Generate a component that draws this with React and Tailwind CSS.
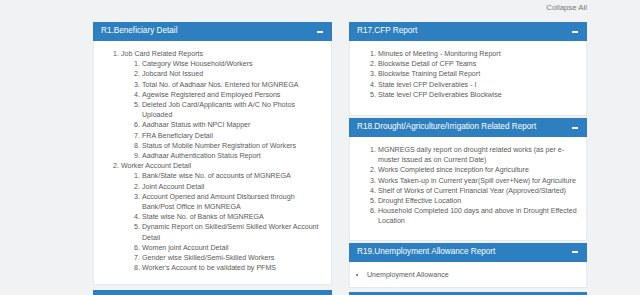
function PanelHeader({ title }) {
  return (
    <div className="flex h-[19px] items-center justify-between bg-[#2d7fbf] pl-[8px] pr-[9px] text-[8.2px] text-white">
      <span>{title}</span>
      <span className="block h-[2px] w-[6px] bg-white" />
    </div>
  );
}

function NumList({ items }) {
  return (
    <ol className="ml-[28px] list-decimal">
      {items.map((item) => (
        <li key={item}>{item}</li>
      ))}
    </ol>
  );
}

const jobCard = [
  'Category Wise Household/Workers',
  'Jobcard Not Issued',
  'Total No. of Aadhaar Nos. Entered for MGNREGA',
  'Agewise Registered and Employed Persons',
  'Deleted Job Card/Applicants with A/C No Photos Uploaded',
  'Aadhaar Status with NPCI Mapper',
  'FRA Beneficiary Detail',
  'Status of Mobile Number Registration of Workers',
  'Aadhaar Authentication Status Report',
];

const workerAccount = [
  'Bank/State wise No. of accounts of MGNREGA',
  'Joint Account Detail',
  'Account Opened and Amount Disbursed through Bank/Post Office in MGNREGA',
  'State wise No. of Banks of MGNREGA',
  'Dynamic Report on Skilled/Semi Skilled Worker Account Detail',
  'Women joint Account Detail',
  'Gender wise Skilled/Semi-Skilled Workers',
  "Worker's Account to be validated by PFMS",
];

const cfp = [
  'Minutes of Meeting - Monitoring Report',
  'Blockwise Detail of CFP Teams',
  'Blockwise Training Detail Report',
  'State level CFP Deliverables - I',
  'State level CFP Deliverables Blockwise',
];

const drought = [
  'MGNREGS daily report on drought related works (as per e-muster issued as on Current Date)',
  'Works Completed since inception for Agriculture',
  'Works Taken-up in Current year(Spill over+New) for Agriculture',
  'Shelf of Works of Current Financial Year (Approved/Started)',
  'Drought Effective Location',
  'Household Completed 100 days and above in Drought Effected Location',
];

export default function App() {
  return (
    <div className="h-[295px] overflow-hidden bg-[#f0f2f4] font-['Liberation_Sans',Arial,sans-serif] text-[7.1px] leading-[10.2px] text-[#5a5a5a]">
      <div className="flex h-[22px] items-start justify-end pr-[53px] pt-[3px] text-[7.8px] text-[#777]">
        Collapse All
      </div>
      <div className="flex items-start gap-[17px] pl-[93px]">
        <div className="w-[239px]">
          <PanelHeader title="R1.Beneficiary Detail" />
          <div className="border border-t-0 border-[#e6e9ec] bg-white pb-[11px] pr-[10px] pt-[8px]">
            <ol className="ml-[27px] list-decimal">
              <li>
                Job Card Related Reports
                <ol className="ml-[21px] list-decimal">
                  {jobCard.map((item) => (
                    <li key={item}>{item}</li>
                  ))}
                </ol>
              </li>
              <li>
                Worker Account Detail
                <ol className="ml-[21px] list-decimal">
                  {workerAccount.map((item) => (
                    <li key={item}>{item}</li>
                  ))}
                </ol>
              </li>
            </ol>
          </div>
          <div className="mt-[5px]">
            <PanelHeader title="" />
          </div>
        </div>

        <div className="flex w-[238px] flex-col gap-[2px]">
          <div>
            <PanelHeader title="R17.CFP Report" />
            <div className="border border-t-0 border-[#e6e9ec] bg-white pb-[15px] pr-[15px] pt-[8px]">
              <NumList items={cfp} />
            </div>
          </div>
          <div>
            <PanelHeader title="R18.Drought/Agriculture/Irrigation Related Report" />
            <div className="border border-t-0 border-[#e6e9ec] bg-white pb-[13px] pr-[8px] pt-[8px]">
              <NumList items={drought} />
            </div>
          </div>
          <div>
            <PanelHeader title="R19.Unemployment Allowance Report" />
            <div className="border border-t-0 border-[#e6e9ec] bg-white pb-[7px] pt-[8px]">
              <ul className="ml-[17px] list-disc">
                <li>Unemployment Allowance</li>
              </ul>
            </div>
          </div>
          <div className="mt-[2px]">
            <PanelHeader title="" />
          </div>
        </div>
      </div>
    </div>
  );
}
